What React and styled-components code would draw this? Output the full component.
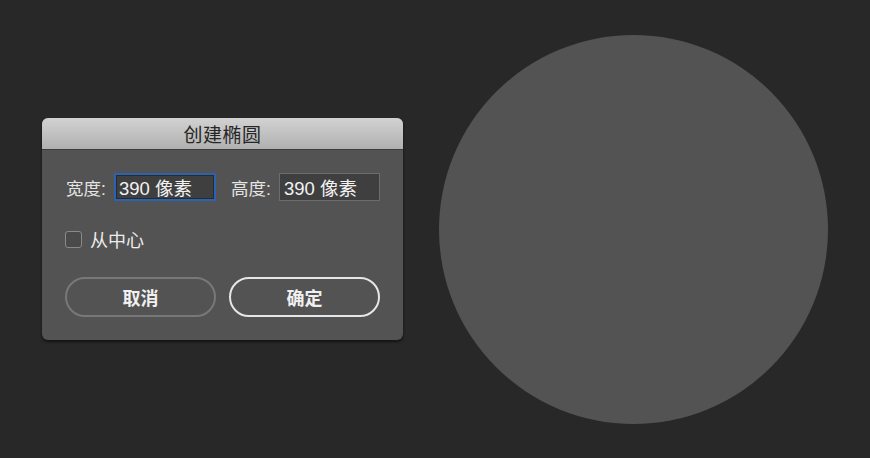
import React from "react";
import styled, { createGlobalStyle } from "styled-components";

const Global = createGlobalStyle`
  html, body { margin: 0; padding: 0; background: #282828; }
  body { font-family: "Liberation Sans", "Noto Sans CJK SC", sans-serif; }
`;

const Page = styled.div`
  width: 870px;
  height: 458px;
  box-sizing: border-box;
  padding: 0 42px;
  display: flex;
  align-items: center;
  gap: 36px;
  background: #282828;
`;

const Dialog = styled.div`
  width: 361px;
  height: 222px;
  flex: none;
  background: #535353;
  border-radius: 6px;
  overflow: hidden;
  box-shadow: 0 2px 3px rgba(0, 0, 0, 0.55);
  display: flex;
  flex-direction: column;
`;

const TitleBar = styled.div`
  height: 31px;
  flex: none;
  background: linear-gradient(#d2d2d2, #b0b0b0);
  border-bottom: 1px solid #3c3c3c;
  display: flex;
  align-items: center;
  justify-content: center;
  font-size: 19px;
  color: #262626;
  letter-spacing: 0.5px;
`;

const Body = styled.div`
  flex: 1;
  padding: 23px 22px 0 24px;
  display: flex;
  flex-direction: column;
`;

const FieldRow = styled.div`
  display: flex;
  align-items: center;
  height: 28px;
`;

const Label = styled.span`
  width: 48px;
  flex: none;
  font-size: 17.5px;
  color: #e4e4e4;
  margin-left: ${(p) => p.$ml || 0}px;
`;

const Input = styled.div`
  width: ${(p) => (p.$focused ? 102 : 101)}px;
  height: 28px;
  box-sizing: border-box;
  background: #3f3f3f;
  border: ${(p) => (p.$focused ? "2px solid #2b63b3" : "1px solid #6c6c6c")};
  box-shadow: ${(p) => (p.$focused ? "inset 0 0 0 1px #2a2a2a" : "none")};
  padding-left: ${(p) => (p.$focused ? 3 : 4)}px;
  display: flex;
  align-items: center;
  font-size: 18.5px;
  color: #f2f2f2;
  white-space: nowrap;
`;

const CheckRow = styled.label`
  display: flex;
  align-items: center;
  margin-top: 29px;
  margin-left: -1px;
  height: 18px;
  font-size: 18px;
  color: #ececec;
`;

const Box = styled.span`
  width: 17px;
  height: 17px;
  box-sizing: border-box;
  border: 1px solid #8a8a8a;
  border-radius: 3px;
  background: #4a4a4a;
  margin-right: 8px;
`;

const ButtonRow = styled.div`
  display: flex;
  gap: 13px;
  margin-top: 29px;
  margin-left: -1px;
`;

const Button = styled.button`
  width: 151px;
  height: 40px;
  box-sizing: border-box;
  border-radius: 20px;
  background: #535353;
  border: ${(p) => (p.$primary ? "2px solid #e6e6e6" : "2px solid #787878")};
  color: #f0f0f0;
  font-family: inherit;
  font-size: 18px;
  font-weight: 600;
  padding: 0;
`;

const Circle = styled.div`
  width: 389px;
  height: 389px;
  flex: none;
  border-radius: 50%;
  background: #535353;
`;

export default function App() {
  return (
    <>
      <Global />
      <Page>
        <Dialog>
          <TitleBar>创建椭圆</TitleBar>
          <Body>
            <FieldRow>
              <Label>宽度:</Label>
              <Input $focused>390 像素</Input>
              <Label $ml={15}>高度:</Label>
              <Input>390 像素</Input>
            </FieldRow>
            <CheckRow>
              <Box />
              从中心
            </CheckRow>
            <ButtonRow>
              <Button>取消</Button>
              <Button $primary>确定</Button>
            </ButtonRow>
          </Body>
        </Dialog>
        <Circle />
      </Page>
    </>
  );
}
